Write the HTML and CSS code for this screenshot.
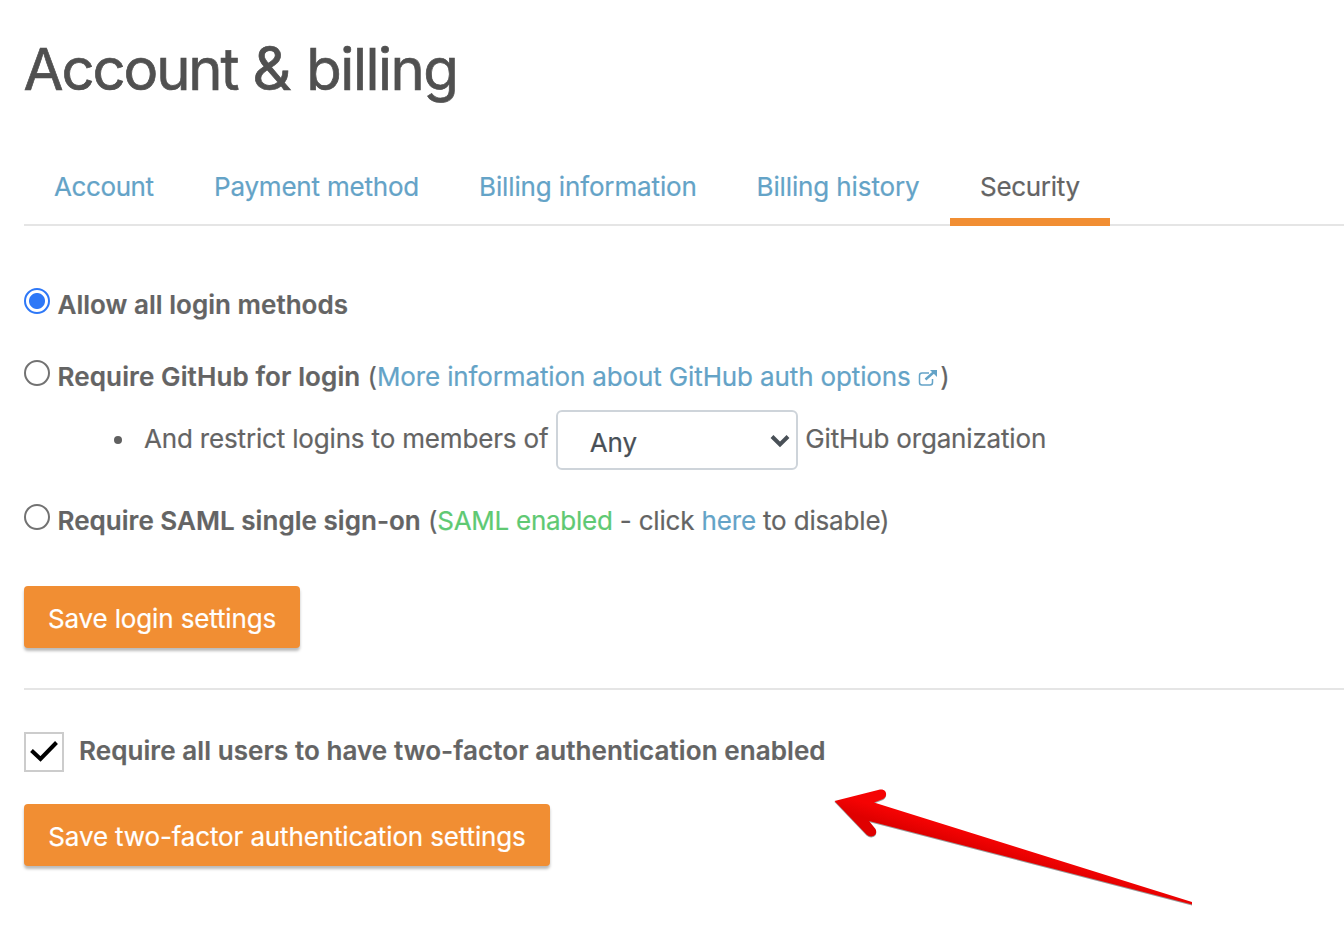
FILE: index.html
```
<!DOCTYPE html>
<html lang="en">
<head>
<meta charset="utf-8">
<title>Account &amp; billing</title>
<link rel="stylesheet" href="styles.css">
</head>
<body>
<main class="page">
  <h1 class="title"><span class="word">Account</span> <span class="amp">&amp;</span> billing</h1>
  <nav class="tabs">
    <a class="tab tab-account">Account</a>
    <a class="tab tab-payment">Payment method</a>
    <a class="tab tab-info">Billing information</a>
    <a class="tab tab-history">Billing history</a>
    <a class="tab tab-security active">Security</a>
  </nav>
  <form class="login">
    <div class="option"><span class="radio checked"></span><p><b>Allow all login methods</b></p></div>
    <div class="option"><span class="radio"></span><p><b class="github">Require GitHub for login</b> (<a class="more">More information about GitHub auth options <svg class="ext" viewBox="0 0 20 18"><path d="M11 4H4a2.500 2.500 0 0 0-2.500 2.500v7A2.500 2.500 0 0 0 4 16h8a2.500 2.500 0 0 0 2.500-2.500V10" fill="none" stroke="currentColor" stroke-width="1.500"/><path d="M7.500 10.500 16 3" fill="none" stroke="currentColor" stroke-width="2.500"/><path d="M12 1h7v7z" fill="currentColor"/></svg></a><span class="close">)</span></p></div>
    <div class="restrict"><span class="bullet"></span><span class="members">And restrict logins to members of</span>
      <div class="select"><span>Any</span><svg class="chevron" viewBox="0 0 20 14"><path d="m2 2.500 8 8 8-8" fill="none" stroke="currentColor" stroke-width="4"/></svg></div><span class="members">GitHub organization</span></div>
    <div class="option"><span class="radio"></span><p><b>Require SAML single sign-on</b> (<span class="enabled">SAML enabled</span> - click <a>here</a> to disable)</p></div>
    <button type="button" class="save save-login">Save login settings</button>
  </form>
  <form class="twofactor">
    <div class="require"><span class="checkbox"><svg viewBox="0 0 36 36"><path d="m5.500 16.500 9 8.500L30.500 8.500" fill="none" stroke="#000" stroke-width="4"/></svg></span><b class="factor">Require all users to have two-factor authentication enabled</b></div>
    <button type="button" class="save save-factor">Save two-factor authentication settings</button>
  </form>
  <svg class="arrow" viewBox="0 0 380 130">
    <defs><linearGradient id="red" gradientUnits="userSpaceOnUse" x1="120" y1="44" x2="116" y2="58"><stop stop-color="#f50303"/><stop offset="1" stop-color="#df0000"/></linearGradient></defs>
    <path d="M14.500 21 60 9.500c7-1 8 7 3 9.500L54 22.500 372 122v2.500L49 41l6.500 8c3 6-4 10-9 5.500z" fill="url(#red)"/>
  </svg>
</main>
</body>
</html>
```
FILE: styles.css
```
*{box-sizing:border-box}
body{margin:0;background:#fff;color:#646464;font:400 26px/36px Inter,sans-serif;letter-spacing:-.17px;-webkit-text-stroke:.2px;overflow:hidden}
.page{position:relative;height:950px;padding:33px 0 0 24px}
.title{margin:0 0 0 -.5px;height:119px;font-size:58px;font-weight:400;line-height:72px;letter-spacing:-1.5px;color:#505050;-webkit-text-stroke:.7px}
.word{letter-spacing:-2.1px}
.amp{font-size:61px;line-height:1;letter-spacing:0}
a{color:#64a3c7}
.tabs{display:flex;height:74px;border-bottom:2px solid #e5e5e5}
.tab{height:74px;padding:17px 0 0 30px;white-space:nowrap}
.tab-account{width:160px;letter-spacing:-.4px}
.tab-payment{width:265px;letter-spacing:-.2px}
.tab-info{width:277.5px;letter-spacing:-.13px}
.tab-history{width:223.5px;letter-spacing:-.12px}
.tab-security{width:160px;letter-spacing:-.3px}
.tab.active{color:#646464;border-bottom:8px solid #f18e33}
.login{height:464px;padding-top:61px;border-bottom:2px solid #e5e5e5}
.option{display:flex;height:36px;margin-bottom:36px;white-space:nowrap}
.option p{margin:0}
b{font-weight:600;letter-spacing:.03px}
.github{letter-spacing:.12px}
.factor{letter-spacing:.08px}
.more{letter-spacing:-.13px}
.radio{width:26px;height:26px;margin:1px 7.5px 0 0;border:2px solid #727272;border-radius:50%}
.radio.checked{border-color:#2e78f7;background:radial-gradient(circle,#2e78f7 0 7.5px,#fff 8.5px)}
.ext{width:20px;height:18px;vertical-align:-1px}
.close{margin-left:2.5px}
.enabled{color:#5fc973;letter-spacing:-.27px}
.restrict{display:flex;align-items:center;height:60px;margin:-21px 0 33px 90px;white-space:nowrap}
.bullet{width:8px;height:8px;margin-right:22px;border-radius:50%;background:#606060}
.members{position:relative;top:-1px}
.select{display:flex;align-items:center;justify-content:space-between;width:242px;height:60px;margin:0 7px 0 8px;padding:6px 6px 0 31.5px;border:2px solid #ced4da;border-radius:6px;color:#495057}
.chevron{width:20px;height:14px;margin-top:-5px}
.save{display:block;height:62px;padding:4px 0 0;border:0;border-radius:4px;background:#f18e33;color:#fff;font:inherit;letter-spacing:-.14px;white-space:nowrap;box-shadow:0 3px 3px #bbb}
.save-login{width:276px;margin-top:47px}
.save-factor{width:526px}
.twofactor{padding-top:42px}
.require{display:flex;height:40px;margin-bottom:32px;line-height:38px;white-space:nowrap}
.checkbox{width:40px;height:40px;margin-right:15px;border:2px solid #ccc}
.checkbox svg{display:block}
.arrow{position:absolute;left:820px;top:780px;width:380px;height:130px;filter:drop-shadow(0 1px .5px rgba(0,0,0,.4))}
```
